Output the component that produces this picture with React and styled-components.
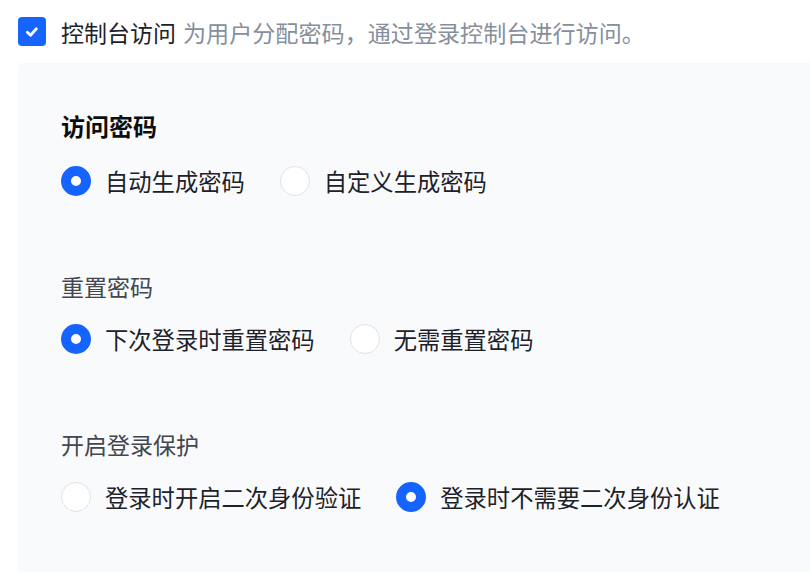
import React, { useState } from "react";
import styled, { createGlobalStyle } from "styled-components";

const GlobalStyle = createGlobalStyle`
  body {
    margin: 0;
    background: #ffffff;
    font-family: "Noto Sans CJK SC", "Noto Sans", sans-serif;
  }
`;

const Page = styled.div`
  padding: 17px 0 0 18px;
`;

const Header = styled.label`
  display: flex;
  align-items: center;
  gap: 15px;
  height: 29px;
  cursor: pointer;
`;

const CheckBox = styled.span`
  width: 28px;
  height: 29px;
  border-radius: 4px;
  background: ${({ checked }) => (checked ? "#1664ff" : "#ffffff")};
  border: ${({ checked }) => (checked ? "none" : "1px solid #dde2e9")};
  display: flex;
  align-items: center;
  justify-content: center;
  box-sizing: border-box;
`;

const Title = styled.span`
  font-size: 23px;
  line-height: 32px;
  color: #1d2129;
`;

const Desc = styled.span`
  font-size: 23.1px;
  color: #868f9c;
  margin-left: 7px;
`;

const Panel = styled.div`
  margin-top: 17px;
  background: #f9fafc;
  border-radius: 4px 0 0 4px;
  padding: 47px 0 60px 43px;
`;

const Section = styled.div`
  & + & {
    margin-top: 74px;
  }
`;

const Heading = styled.div`
  font-size: ${({ strong }) => (strong ? "24px" : "23px")};
  font-weight: ${({ strong }) => (strong ? 600 : 400)};
  line-height: 32px;
  color: ${({ strong }) => (strong ? "#0c0d0e" : "#42464e")};
  margin-bottom: ${({ strong }) => (strong ? "24px" : "22px")};
`;

const Group = styled.div`
  display: flex;
  align-items: center;
  height: 30px;
`;

const Option = styled.label`
  display: flex;
  align-items: center;
  gap: 14px;
  margin-right: 35px;
  cursor: pointer;
`;

const Radio = styled.span`
  width: 30px;
  height: 30px;
  border-radius: 50%;
  box-sizing: border-box;
  background: #ffffff;
  border: ${({ checked }) => (checked ? "10px solid #1664ff" : "1px solid #dfe3ea")};
`;

const OptionText = styled.span`
  font-size: 23.3px;
  line-height: 32px;
  color: #1d2129;
`;

const Check = () => (
  <svg width="16" height="16" viewBox="0 0 16 16">
    <path d="M3.4 8.2 L6.5 11.2 L12.4 4.8" fill="none" stroke="#fff" strokeWidth="2.8" strokeLinecap="round" strokeLinejoin="round" />
  </svg>
);

const sections = [
  { key: "pwd", title: "访问密码", strong: true, options: ["自动生成密码", "自定义生成密码"], init: 0 },
  { key: "reset", title: "重置密码", options: ["下次登录时重置密码", "无需重置密码"], init: 0 },
  { key: "mfa", title: "开启登录保护", options: ["登录时开启二次身份验证", "登录时不需要二次身份认证"], init: 1 },
];

const RadioGroup = ({ options, value, onChange }) => (
  <Group>
    {options.map((o, i) => (
      <Option key={o} onClick={() => onChange(i)}>
        <Radio checked={value === i} />
        <OptionText>{o}</OptionText>
      </Option>
    ))}
  </Group>
);

export default function App() {
  const [enabled, setEnabled] = useState(true);
  const [values, setValues] = useState(
    Object.fromEntries(sections.map((s) => [s.key, s.init]))
  );

  return (
    <>
      <GlobalStyle />
      <Page>
        <Header onClick={() => setEnabled(!enabled)}>
          <CheckBox checked={enabled}>{enabled && <Check />}</CheckBox>
          <Title>
            控制台访问<Desc>为用户分配密码，通过登录控制台进行访问。</Desc>
          </Title>
        </Header>
        <Panel>
          {sections.map((s) => (
            <Section key={s.key}>
              <Heading strong={s.strong}>{s.title}</Heading>
              <RadioGroup
                options={s.options}
                value={values[s.key]}
                onChange={(i) => setValues({ ...values, [s.key]: i })}
              />
            </Section>
          ))}
        </Panel>
      </Page>
    </>
  );
}
